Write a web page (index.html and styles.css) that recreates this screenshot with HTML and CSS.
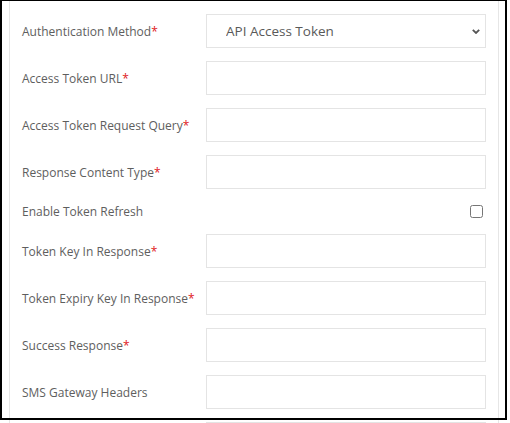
FILE: index.html
```html
<!DOCTYPE html>
<html>
<head>
<meta charset="utf-8">
<link rel="stylesheet" href="styles.css">
</head>
<body>
<div class="panel">
  <form class="form">
    <label class="lbl">Authentication Method<span class="req">*</span></label>
    <div class="select-wrap">
      <select class="select">
        <option>API Access Token</option>
      </select>
      <svg class="chev" width="8" height="5" viewBox="0 0 8 5"><path d="M0.8 0.8 L4 4 L7.2 0.8" fill="none" stroke="#555" stroke-width="1.8"/></svg>
    </div>

    <label class="lbl">Access Token URL<span class="req">*</span></label>
    <input class="inp" type="text">

    <label class="lbl">Access Token Request Query<span class="req">*</span></label>
    <input class="inp" type="text">

    <label class="lbl">Response Content Type<span class="req">*</span></label>
    <input class="inp" type="text">

    <label class="lbl short">Enable Token Refresh</label>
    <div class="check-cell"><input class="chk" type="checkbox"></div>

    <label class="lbl">Token Key In Response<span class="req">*</span></label>
    <input class="inp" type="text">

    <label class="lbl">Token Expiry Key In Response<span class="req">*</span></label>
    <input class="inp" type="text">

    <label class="lbl">Success Response<span class="req">*</span></label>
    <input class="inp" type="text">

    <label class="lbl">SMS Gateway Headers</label>
    <input class="inp" type="text">

    <label class="lbl"></label>
    <input class="inp" type="text">
  </form>
</div>
<div class="frame"></div>
</body>
</html>
```

FILE: styles.css
```css
html, body {
  margin: 0;
  padding: 0;
  background: #fff;
  overflow: hidden;
}
body {
  font-family: "Open Sans", "Noto Sans", sans-serif;
  color: #555;
}
.panel {
  margin-left: 9px;
  border-left: 1px solid #e6e6e6;
  border-right: 1px solid #e6e6e6;
  padding: 14px 12px 20px 12px;
  box-sizing: content-box;
  width: 464px;
}
.form {
  display: grid;
  grid-template-columns: 184px 280px;
  row-gap: 13px;
  align-items: center;
}
.lbl {
  font-size: 12px;
  color: #5e5e5e;
  line-height: 16px;
  padding-top: 1px;
}
.req {
  color: #e0181b;
}
.inp {
  display: block;
  box-sizing: border-box;
  width: 280px;
  height: 34px;
  margin: 0;
  border: 1px solid #e4e4e4;
  border-radius: 0;
  background: #fff;
  outline: none;
  padding: 0 12px;
}
.select-wrap {
  position: relative;
  width: 280px;
  height: 34px;
}
.select {
  -webkit-appearance: none;
  appearance: none;
  display: block;
  box-sizing: border-box;
  width: 280px;
  height: 34px;
  margin: 0;
  border: 1px solid #e4e4e4;
  border-radius: 0;
  background: #fff;
  padding: 0 0 0 19px;
  font-family: "Open Sans", "Noto Sans", sans-serif;
  font-size: 13.5px;
  color: #595959;
  outline: none;
}
.chev {
  position: absolute;
  right: 6px;
  top: 15px;
  pointer-events: none;
}
.check-cell {
  height: 19px;
  display: flex;
  align-items: center;
  justify-content: flex-end;
}
.chk {
  width: 13px;
  height: 13px;
  margin: 0 3px 0 0;
}
.frame {
  position: absolute;
  left: 0;
  top: 0;
  width: 503px;
  height: 417px;
  border: 2px solid #000;
  border-top-width: 1px;
  pointer-events: none;
}
```
